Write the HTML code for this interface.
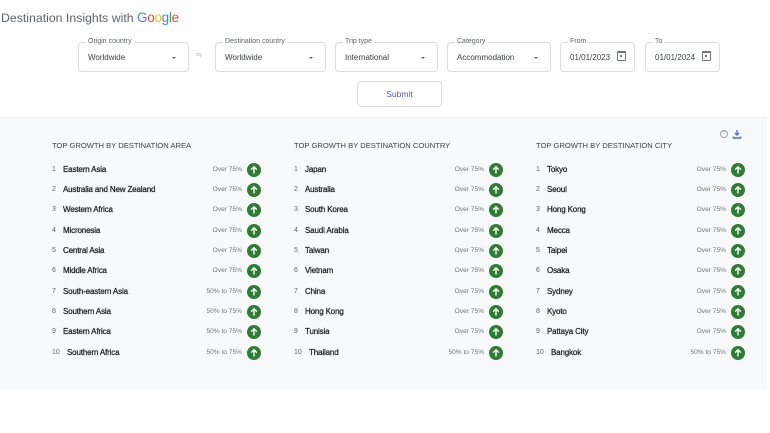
<!DOCTYPE html>
<html><head><meta charset="utf-8"><style>
*{margin:0;padding:0;box-sizing:border-box}
body{width:770px;height:433px;background:#fff;font-family:"Liberation Sans",Arial,sans-serif;position:relative;overflow:hidden;color:#202124}
.a{position:absolute}
.title{left:1px;top:10px;font-size:12.3px;color:#5f6368}
.g{font-size:13.5px;letter-spacing:-0.3px}
.box{position:absolute;top:42px;height:30px;border:1px solid #dadce0;border-radius:4px;background:#fff}
.lab{position:absolute;top:-6px;left:7px;background:#fff;padding:0 2px;font-size:7px;color:#5f6368;line-height:10px}
.val{position:absolute;left:9px;top:10px;font-size:8px;color:#3c4043}
.dd{position:absolute;right:12px;top:14px;width:0;height:0;border-left:2.5px solid transparent;border-right:2.5px solid transparent;border-top:2.5px solid #5f6368}
.cal{position:absolute;right:8px;top:8px;width:9px;height:10px;border:1.2px solid #70757a;border-radius:1px;border-top-width:2.5px}
.cal:after{content:"";position:absolute;left:1.5px;top:1.5px;width:2px;height:2px;background:#70757a}
.panel{left:0;top:117px;width:767px;height:273px;background:#f8f9fa;border-top:1px solid #e8eaed}
.h{font-size:7.6px;letter-spacing:0;color:#3c4043;top:141px}
.n{font-size:7px;color:#5f6368}
.nm{font-size:8px;color:#202124;font-weight:normal;-webkit-text-stroke:0.25px #202124;letter-spacing:-0.15px}
.p{font-size:6.6px;color:#70757a;text-align:right;width:60px}
.c{width:14px;height:14px;border-radius:50%;background:#2e7d32}
.c svg{display:block}
</style></head><body>
<div class="a title">Destination Insights with <span class="g"><span style="color:#4285f4">G</span><span style="color:#ea4335">o</span><span style="color:#fbbc05">o</span><span style="color:#4285f4">g</span><span style="color:#34a853">l</span><span style="color:#ea4335">e</span></span></div>

<div class="box" style="left:78px;width:111px"><span class="lab">Origin country</span><span class="val">Worldwide</span><span class="dd"></span></div>
<div class="a" style="left:196px;top:51px;font-size:7px;color:#bbb">⇆</div>
<div class="box" style="left:215px;width:111px"><span class="lab">Destination country</span><span class="val">Worldwide</span><span class="dd"></span></div>
<div class="box" style="left:335px;width:103px"><span class="lab">Trip type</span><span class="val">International</span><span class="dd"></span></div>
<div class="box" style="left:447px;width:104px"><span class="lab">Category</span><span class="val">Accommodation</span><span class="dd"></span></div>
<div class="box" style="left:560px;width:75px"><span class="lab">From</span><span class="val">01/01/2023</span><span class="cal"></span></div>
<div class="box" style="left:645px;width:75px"><span class="lab">To</span><span class="val">01/01/2024</span><span class="cal"></span></div>
<div class="a" style="left:357px;top:81px;width:85px;height:26px;border:1px solid #dadce0;border-radius:4px;text-align:center;line-height:24px;font-size:8.5px;color:#4a5bd4">Submit</div>

<div class="a panel"></div>
<div class="a h" style="left:52px">TOP GROWTH BY DESTINATION AREA</div>
<div class="a h" style="left:294px">TOP GROWTH BY DESTINATION COUNTRY</div>
<div class="a h" style="left:536px">TOP GROWTH BY DESTINATION CITY</div>
<div class="a" style="left:720px;top:130px;width:8px;height:8px;border:1px solid #9aa0a6;border-radius:50%;font-size:5px;color:#9aa0a6;text-align:center;line-height:6px">?</div>
<svg class="a" style="left:732px;top:129px" width="10" height="10" viewBox="0 0 10 10"><path d="M5 1v5M3 4l2 2 2-2M1.5 7.5v1.5h7v-1.5" stroke="#4a6ee0" stroke-width="1.4" fill="none"/></svg>

<div id="rows"></div>
<script>
var cols=[[52,[["Eastern Asia","Over 75%"],["Australia and New Zealand","Over 75%"],["Western Africa","Over 75%"],["Micronesia","Over 75%"],["Central Asia","Over 75%"],["Middle Africa","Over 75%"],["South-eastern Asia","50% to 75%"],["Southern Asia","50% to 75%"],["Eastern Africa","50% to 75%"],["Southern Africa","50% to 75%"]]],
[294,[["Japan","Over 75%"],["Australia","Over 75%"],["South Korea","Over 75%"],["Saudi Arabia","Over 75%"],["Taiwan","Over 75%"],["Vietnam","Over 75%"],["China","Over 75%"],["Hong Kong","Over 75%"],["Tunisia","Over 75%"],["Thailand","50% to 75%"]]],
[536,[["Tokyo","Over 75%"],["Seoul","Over 75%"],["Hong Kong","Over 75%"],["Mecca","Over 75%"],["Taipei","Over 75%"],["Osaka","Over 75%"],["Sydney","Over 75%"],["Kyoto","Over 75%"],["Pattaya City","Over 75%"],["Bangkok","50% to 75%"]]]];
var ys=[170,190,210,231,251,271,292,312,332,353],h="";
cols.forEach(function(c){var x=c[0];c[1].forEach(function(r,i){var y=ys[i];
h+='<div class="a n" style="left:'+x+'px;top:'+(y-4)+'px">'+(i+1)+'</div>';
h+='<div class="a nm" style="left:'+(x+(i==9?15:11))+'px;top:'+(y-5)+'px">'+r[0]+'</div>';
h+='<div class="a p" style="left:'+(x+130)+'px;top:'+(y-4)+'px">'+r[1]+'</div>';
h+='<div class="a c" style="left:'+(x+195)+'px;top:'+(y-7)+'px"><svg width="14" height="14" viewBox="0 0 14 14"><path d="M7 10.5V4M4.2 6.6L7 3.8l2.8 2.8" stroke="#fff" stroke-width="1.4" fill="none"/></svg></div>';
});});
document.getElementById("rows").innerHTML=h;
</script>
</body></html>
